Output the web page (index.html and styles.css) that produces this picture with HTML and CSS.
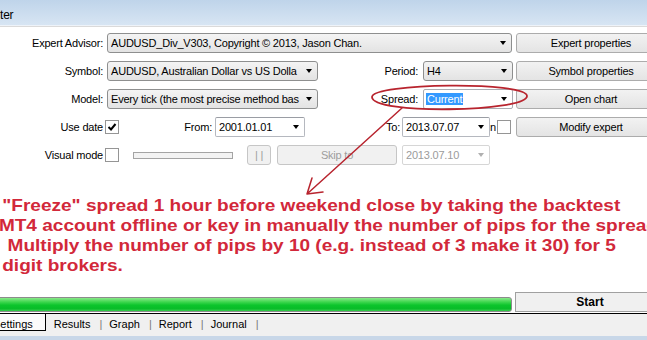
FILE: index.html
```html
<!DOCTYPE html>
<html lang="en">
<head>
    <meta charset="UTF-8">
    <title>Tester</title>
    <link rel="stylesheet" href="styles.css">
</head>
<body>
    <div class="titlebar">ter</div>

    <div class="form">
        <div class="row">
            <span class="lbl lbl-main">Expert Advisor:</span>
            <div class="combo combo-ea"><span class="combo-text">AUDUSD_Div_V303, Copyright © 2013, Jason Chan.</span><span class="arrow"></span></div>
            <button class="btn btn-side">Expert properties</button>
        </div>
        <div class="row">
            <span class="lbl lbl-main">Symbol:</span>
            <div class="combo combo-mid"><span class="combo-text">AUDUSD, Australian Dollar vs US Dolla</span><span class="arrow"></span></div>
            <span class="lbl lbl-mid">Period:</span>
            <div class="combo combo-small"><span class="combo-text">H4</span><span class="arrow"></span></div>
            <button class="btn btn-side btn-near">Symbol properties</button>
        </div>
        <div class="row">
            <span class="lbl lbl-main">Model:</span>
            <div class="combo combo-mid"><span class="combo-text">Every tick (the most precise method bas</span><span class="arrow"></span></div>
            <span class="lbl lbl-mid">Spread:</span>
            <div class="combo combo-small combo-edit"><span class="combo-text"><span class="selected">Current</span></span><span class="arrow"></span></div>
            <button class="btn btn-side btn-near">Open chart</button>
        </div>
        <div class="row">
            <span class="lbl lbl-main">Use date</span>
            <span class="check"><svg width="12" height="12" viewBox="0 0 12 12"><path d="M2.5 6 L5 8.5 L9.5 3" fill="none" stroke="#000" stroke-width="2"/></svg></span>
            <span class="lbl lbl-from">From:</span>
            <div class="datebox date-from"><span class="combo-text">2001.01.01</span><span class="arrow"></span></div>
            <span class="lbl lbl-to">To:</span>
            <div class="datebox date-to"><span class="combo-text">2013.07.07</span><span class="arrow"></span></div>
            <span class="cut">n</span>
            <span class="check check-opt"></span>
            <button class="btn btn-side btn-modify">Modify expert</button>
        </div>
        <div class="row">
            <span class="lbl lbl-main">Visual mode</span>
            <span class="check"></span>
            <span class="track"></span>
            <button class="btn btn-off btn-pause">| |</button>
            <button class="btn btn-off btn-skip">Skip to</button>
            <div class="datebox date-to date-off"><span class="combo-text">2013.07.10</span><span class="arrow"></span></div>
        </div>
    </div>

    <div class="note">
        <div class="note-line">"Freeze" spread 1 hour before weekend close by taking the backtest</div>
        <div class="note-line note-shift">MT4 account offline or key in manually the number of pips for the spread</div>
        <div class="note-line"> Multiply the number of pips by 10 (e.g. instead of 3 make it 30) for 5</div>
        <div class="note-line">digit brokers.</div>
    </div>

    <div class="run">
        <div class="progress"></div>
        <button class="btn btn-start">Start</button>
    </div>

    <div class="tabs">
        <span class="tab-active">Settings</span>
        <span class="tab">Results</span><span class="sep">|</span>
        <span>Graph</span><span class="sep">|</span>
        <span>Report</span><span class="sep">|</span>
        <span>Journal</span><span class="sep">|</span>
    </div>
    <div class="strip"></div>

    <!-- red markup drawn over the dialog -->
    <svg class="markup" width="647" height="340" viewBox="0 0 647 340">
        <path d="M372 97 C372 83 527 81 527 96 C527 112 372 115 372 97 Z" fill="none" stroke="#b8242e" stroke-width="1.8"/>
        <path d="M402 108 L307 194 M307 194 L312 178 M307 194 L323 192" fill="none" stroke="#b8242e" stroke-width="1.5" stroke-linecap="round"/>
    </svg>
</body>
</html>
```

FILE: styles.css
```css
* {
    margin: 0;
    padding: 0;
    box-sizing: border-box;
}

body {
    width: 647px;
    height: 340px;
    overflow: hidden;
    position: relative;
    font-family: "Liberation Sans", Arial, sans-serif;
    font-size: 11px;
    letter-spacing: -0.2px;
    color: #000;
    background: #fff;
}

.titlebar {
    height: 26px;
    padding-top: 5px;
    line-height: 20px;
    font-size: 12px;
    background: linear-gradient(#bfd4ea, #d7e5f3);
    border-bottom: 1px solid #eef3f9;
}

.form {
    border-top: 1px solid #dadada;
    padding-top: 6px;
    display: flex;
    flex-direction: column;
    gap: 8px;
}

.row {
    display: flex;
    align-items: center;
    height: 20px;
}

.lbl {
    text-align: right;
    white-space: nowrap;
    flex: none;
}

.lbl-main { width: 103px; }
.lbl-mid { width: 102px; padding-right: 2px; }
.lbl-from { width: 93px; }
.lbl-to { width: 95px; }

.combo,
.datebox {
    height: 20px;
    display: flex;
    align-items: center;
    flex: none;
    padding: 0 5px 0 3px;
    overflow: hidden;
}

.combo {
    border: 1px solid #8e8f8f;
    border-radius: 3px;
    background: linear-gradient(#f4f4f4, #e3e3e3);
}

.combo-ea { margin-left: 4px; width: 405px; }
.combo-mid { margin-left: 4px; width: 211px; }
.combo-small { margin-left: 3px; width: 90px; }

.combo-edit {
    background: #fff;
    border-color: #abadb3;
    border-radius: 2px;
    padding-left: 2px;
}

.selected {
    background: #3399ff;
    color: #fff;
    padding: 1px 1px;
}

.combo-text {
    flex: 1;
    white-space: nowrap;
    overflow: hidden;
}

.arrow {
    flex: none;
    width: 0;
    height: 0;
    margin-left: 4px;
    border-left: 3.5px solid transparent;
    border-right: 3.5px solid transparent;
    border-top: 4px solid #000;
}

.datebox {
    background: #fff;
    border: 1px solid #b5b8bf;
    border-top-color: #9a9da4;
    border-radius: 2px;
}

.date-from { margin-left: 3px; width: 90px; }
.date-to { margin-left: 2px; width: 88px; }

.date-off {
    margin-left: 5px;
    color: #9b9b9b;
    border-color: #d6d6d6;
}

.date-off .arrow { border-top-color: #b0b0b0; }

.check {
    flex: none;
    width: 14px;
    height: 14px;
    margin-left: 2px;
    border: 1px solid #959595;
    background: #fff;
    display: flex;
    align-items: center;
    justify-content: center;
}

.cut {
    width: 6px;
    overflow: hidden;
    flex: none;
}

.check-opt { margin-left: 1px; }

.track {
    flex: none;
    width: 100px;
    height: 7px;
    margin-left: 14px;
    border: 1px solid #a4a4a4;
    background: #f3f3f3;
}

.btn {
    flex: none;
    height: 20px;
    font-family: inherit;
    font-size: 11px;
    letter-spacing: inherit;
    color: #000;
    border: 1px solid #acacac;
    border-radius: 3px;
    background: linear-gradient(#f2f2f2, #e4e4e4);
    text-align: center;
}

.btn-side { margin-left: 4px; width: 150px; }
.btn-near { margin-left: 3px; }
.btn-modify { margin-left: 5px; }

.btn-off {
    color: #9d9d9d;
    border-color: #c6c6c6;
    background: #f1f1f1;
}

.btn-pause { margin-left: 14px; width: 24px; }
.btn-skip { margin-left: 6px; width: 120px; }

.note {
    margin-top: 31px;
    padding-left: 2px;
    color: #d2283a;
    font-weight: bold;
    font-size: 17px;
    line-height: 20px;
    letter-spacing: 0;
    transform: scaleX(1.12);
    transform-origin: left top;
}

.note-line { white-space: pre; }
.note-shift { margin-left: -3px; }

.run {
    margin-top: 16px;
    height: 21px;
    display: flex;
    align-items: flex-start;
}

.progress {
    flex: none;
    margin-left: -4px;
    margin-top: 5px;
    width: 516px;
    height: 15px;
    border: 1px solid #8c8c8c;
    border-radius: 3px;
    background: linear-gradient(#8ae88a 0%, #3fd74f 30%, #0cc52c 55%, #08bd28 80%, #35cc4c 100%);
}

.btn-start {
    margin-left: 3px;
    width: 150px;
    font-size: 12px;
    font-weight: bold;
    letter-spacing: 0;
    border-radius: 0;
    background: #f0f0f0;
    border-color: #a0a0a0;
}

.tabs {
    height: 23px;
    display: flex;
    border-top: 1px solid #000;
    background: #f0f0f0;
    line-height: 21px;
    letter-spacing: 0;
    white-space: nowrap;
}

.tab-active {
    margin-left: -12px;
    padding: 0 12px 0 5px;
    height: 17px;
    background: #fbfbfb;
    border-right: 1px solid #000;
    border-bottom: 1px solid #000;
}

.tab { margin-left: 8px; }

.sep {
    margin: 0 7px 0 9px;
    color: #7a7a7a;
}

.strip {
    height: 4px;
    background: #c8d7e8;
}

.markup {
    position: absolute;
    top: 0;
    left: 0;
    pointer-events: none;
}
```
